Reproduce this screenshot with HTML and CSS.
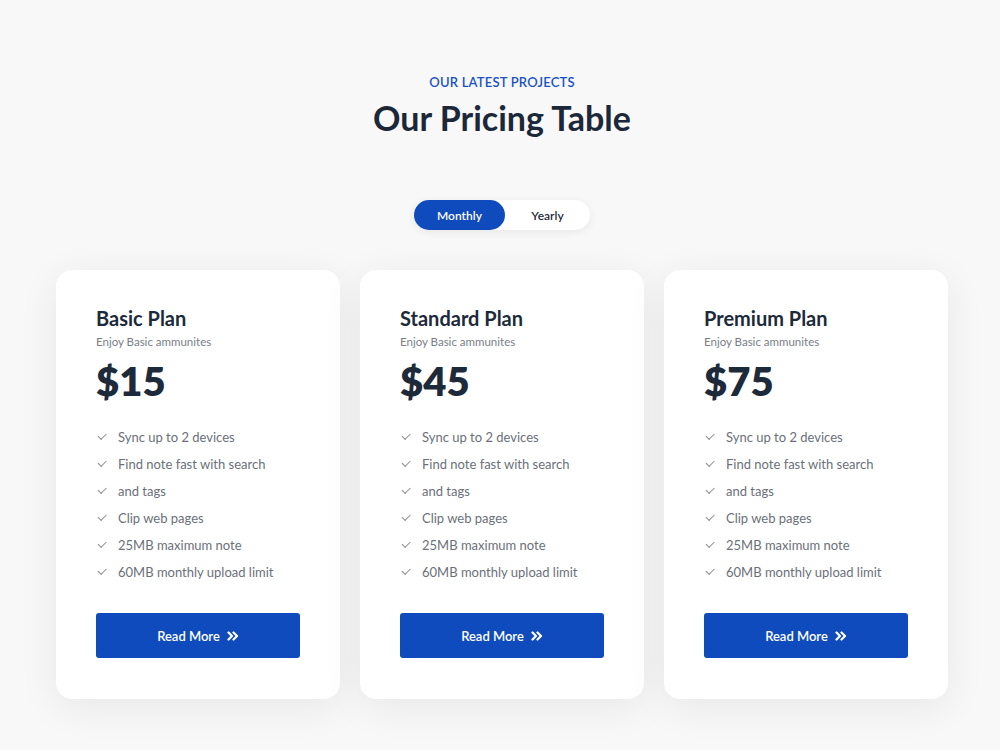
FILE: index.html
```html
<!DOCTYPE html>
<html lang="en">
<head>
    <meta charset="UTF-8" />
    <meta name="viewport" content="width=device-width, initial-scale=1.0" />
    <title>Our Pricing Table</title>
    <link rel="stylesheet" href="styles.css">
</head>
<body>
    <section class="pricing">
        <header class="pricing-head">
            <p class="eyebrow">OUR LATEST PROJECTS</p>
            <h1>Our Pricing Table</h1>
        </header>

        <div class="toggle">
            <button class="toggle-btn active">Monthly</button>
            <button class="toggle-btn">Yearly</button>
        </div>

        <div class="cards">
            <div class="card">
                <h2>Basic Plan</h2>
                <p class="sub">Enjoy Basic ammunites</p>
                <div class="price">$15</div>
                <ul class="features">
                    <li>Sync up to 2 devices</li>
                    <li>Find note fast with search</li>
                    <li>and tags</li>
                    <li>Clip web pages</li>
                    <li>25MB maximum note</li>
                    <li>60MB monthly upload limit</li>
                </ul>
                <a class="read-more" href="#">Read More
                    <svg class="arrows" viewBox="0 0 12 10" width="12" height="10"><path d="M1.5 1.5 5 5 1.5 8.5M6.5 1.5 10 5 6.5 8.5" fill="none" stroke="currentColor" stroke-width="2.2" stroke-linecap="round" stroke-linejoin="round"/></svg>
                </a>
            </div>
            <div class="card">
                <h2>Standard Plan</h2>
                <p class="sub">Enjoy Basic ammunites</p>
                <div class="price">$45</div>
                <ul class="features">
                    <li>Sync up to 2 devices</li>
                    <li>Find note fast with search</li>
                    <li>and tags</li>
                    <li>Clip web pages</li>
                    <li>25MB maximum note</li>
                    <li>60MB monthly upload limit</li>
                </ul>
                <a class="read-more" href="#">Read More
                    <svg class="arrows" viewBox="0 0 12 10" width="12" height="10"><path d="M1.5 1.5 5 5 1.5 8.5M6.5 1.5 10 5 6.5 8.5" fill="none" stroke="currentColor" stroke-width="2.2" stroke-linecap="round" stroke-linejoin="round"/></svg>
                </a>
            </div>
            <div class="card">
                <h2>Premium Plan</h2>
                <p class="sub">Enjoy Basic ammunites</p>
                <div class="price">$75</div>
                <ul class="features">
                    <li>Sync up to 2 devices</li>
                    <li>Find note fast with search</li>
                    <li>and tags</li>
                    <li>Clip web pages</li>
                    <li>25MB maximum note</li>
                    <li>60MB monthly upload limit</li>
                </ul>
                <a class="read-more" href="#">Read More
                    <svg class="arrows" viewBox="0 0 12 10" width="12" height="10"><path d="M1.5 1.5 5 5 1.5 8.5M6.5 1.5 10 5 6.5 8.5" fill="none" stroke="currentColor" stroke-width="2.2" stroke-linecap="round" stroke-linejoin="round"/></svg>
                </a>
            </div>
        </div>
    </section>
</body>
</html>
```

FILE: styles.css
```css
html {
    background-color: #f8f8f8;
}
body {
    margin: 0;
    padding: 0;
    background-color: #f8f8f8;
    font-family: 'Lato', 'Noto Sans', sans-serif;
    color: #1d2a3a;
}
.pricing {
    width: 892px;
    margin: 0 0 0 56px;
    padding: 74px 0 52px;
}
.pricing-head {
    text-align: center;
}
.eyebrow {
    margin: 0;
    font-size: 13px;
    font-weight: 600;
    letter-spacing: 0.2px;
    color: #1a52c4;
}
h1 {
    margin: 8px 0 0;
    font-size: 34px;
    font-weight: 700;
    line-height: 40px;
    color: #1c2839;
}
.toggle {
    display: flex;
    width: 176px;
    height: 30px;
    margin: 62px auto 40px;
    background-color: white;
    border-radius: 15px;
    box-shadow: 0 2px 10px rgba(0, 0, 0, 0.07);
}
.toggle-btn {
    flex: 1;
    border: none;
    background: none;
    border-radius: 15px;
    font-family: inherit;
    font-size: 12px;
    font-weight: 600;
    color: #1d2a3a;
    cursor: pointer;
}
.toggle-btn.active {
    flex: 0 0 91px;
    background-color: #0f4bbd;
    color: white;
}
.cards {
    display: grid;
    grid-template-columns: repeat(3, 284px);
    gap: 20px;
}
.card {
    background-color: white;
    border-radius: 16px;
    padding: 36px 40px 41px;
    box-shadow: 0 8px 40px rgba(0, 0, 0, 0.07);
}
.card h2 {
    margin: 0;
    font-size: 20px;
    font-weight: 700;
    line-height: 24px;
    color: #1d2a3a;
}
.sub {
    margin: 5px 0 0;
    font-size: 11.5px;
    color: #7b8088;
}
.price {
    margin-top: 10px;
    font-size: 40px;
    font-weight: 800;
    line-height: 46px;
    color: #1d2a3a;
}
.features {
    list-style: none;
    margin: 20px 0 0;
    padding: 0;
}
.features li {
    position: relative;
    padding-left: 22px;
    font-size: 13px;
    line-height: 27px;
    color: #6b7079;
}
.features li::before {
    content: "";
    position: absolute;
    left: 2px;
    top: 9px;
    width: 7px;
    height: 3.5px;
    border-left: 1px solid #8a8f96;
    border-bottom: 1px solid #8a8f96;
    transform: rotate(-45deg);
}
.read-more {
    display: flex;
    align-items: center;
    justify-content: center;
    gap: 7px;
    height: 45px;
    margin-top: 27px;
    background-color: #0f4bbd;
    border-radius: 3px;
    color: white;
    font-size: 13px;
    font-weight: 600;
    text-decoration: none;
}
.arrows {
    display: block;
}
```
